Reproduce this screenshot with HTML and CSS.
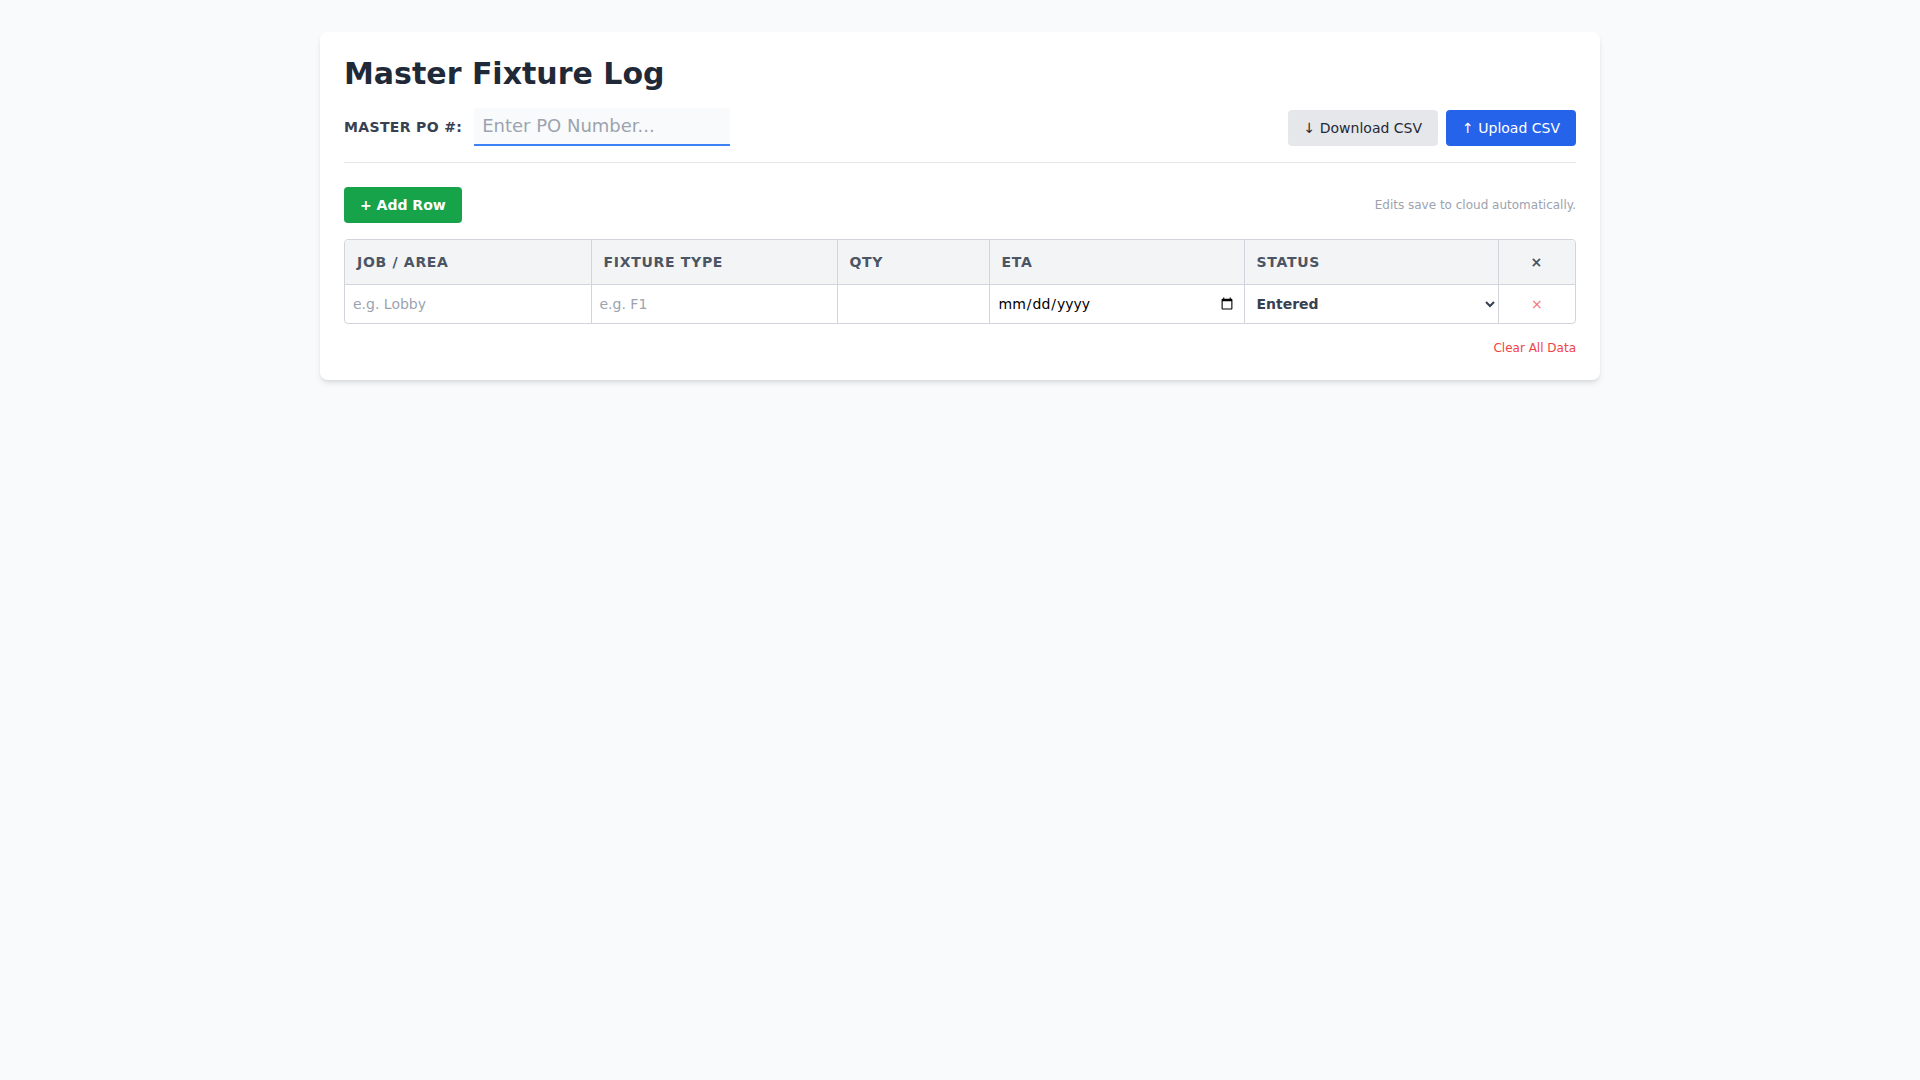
FILE: index.html
```html
<!DOCTYPE html>
<html lang="en">
<head>
  <meta charset="UTF-8">
  <meta name="viewport" content="width=device-width, initial-scale=1.0">
  <title>Master Fixture Log</title>
  <link rel="stylesheet" href="styles.css">
</head>
<body>
  <div class="card">
    <h1>Master Fixture Log</h1>

    <!-- PO number + csv buttons -->
    <div class="top-row">
      <div class="po-group">
        <label class="po-label" for="poNumber">Master PO #:</label>
        <input id="poNumber" class="po-input" type="text" placeholder="Enter PO Number...">
      </div>
      <div class="csv-actions">
        <button class="btn btn-gray">↓ Download CSV</button>
        <button class="btn btn-blue">↑ Upload CSV</button>
      </div>
    </div>

    <div class="toolbar">
      <button class="btn btn-green">+ Add Row</button>
      <span class="save-note">Edits save to cloud automatically.</span>
    </div>

    <div class="table-wrap">
      <table class="log-table">
        <colgroup>
          <col class="col-job">
          <col class="col-type">
          <col class="col-qty">
          <col class="col-eta">
          <col class="col-status">
          <col>
        </colgroup>
        <thead>
          <tr>
            <th>Job / Area</th>
            <th>Fixture Type</th>
            <th>Qty</th>
            <th>ETA</th>
            <th>Status</th>
            <th class="center">×</th>
          </tr>
        </thead>
        <tbody id="rows">
          <tr>
            <td><input class="cell-input" type="text" placeholder="e.g. Lobby"></td>
            <td><input class="cell-input" type="text" placeholder="e.g. F1"></td>
            <td><input class="cell-input" type="number"></td>
            <td><input class="cell-input" type="date"></td>
            <td>
              <select class="cell-select">
                <option>Entered</option>
                <option>Ordered</option>
                <option>Shipped</option>
                <option>Received</option>
              </select>
            </td>
            <td class="center"><button class="del-btn">×</button></td>
          </tr>
        </tbody>
      </table>
    </div>

    <div class="footer-row">
      <button class="clear-btn">Clear All Data</button>
    </div>
  </div>
</body>
</html>
```

FILE: styles.css
```css
* {
  box-sizing: border-box;
}

body {
  margin: 0;
  padding: 32px;
  background: #f9fafb;
  font-family: 'DejaVu Sans', 'Noto Sans', sans-serif;
  color: #1f2937;
}

.card {
  max-width: 1280px;
  margin: 0 auto;
  padding: 24px;
  background: #fff;
  border-radius: 8px;
  box-shadow: 0 4px 6px -1px rgba(0, 0, 0, 0.1), 0 2px 4px -2px rgba(0, 0, 0, 0.1);
}

h1 {
  margin: 0 0 16px;
  font-size: 30px;
  line-height: 36px;
  font-weight: bold;
  color: #1f2937;
}

.top-row {
  display: flex;
  justify-content: space-between;
  align-items: flex-end;
  padding-bottom: 16px;
  margin-bottom: 24px;
  border-bottom: 1px solid #e5e7eb;
}

.po-group {
  display: flex;
  align-items: center;
  gap: 12px;
}

.po-label {
  font-size: 14px;
  line-height: 20px;
  font-weight: bold;
  text-transform: uppercase;
  letter-spacing: 0.025em;
  color: #374151;
}

.po-input {
  width: 256px;
  padding: 4px 8px;
  font-family: inherit;
  font-size: 18px;
  line-height: 28px;
  border: none;
  border-bottom: 2px solid #3b82f6;
  background: #f9fafb;
  color: #1f2937;
  outline: none;
}

.po-input::placeholder,
.cell-input::placeholder {
  color: #9ca3af;
}

.csv-actions {
  display: flex;
  gap: 8px;
}

.btn {
  font-family: inherit;
  font-size: 14px;
  line-height: 20px;
  padding: 8px 16px;
  border: none;
  border-radius: 4px;
  cursor: pointer;
}

.btn-gray {
  background: #e5e7eb;
  color: #1f2937;
}

.btn-blue {
  background: #2563eb;
  color: #fff;
}

.btn-green {
  background: #16a34a;
  color: #fff;
  font-weight: bold;
}

.toolbar {
  display: flex;
  justify-content: space-between;
  align-items: center;
  margin-bottom: 16px;
}

.save-note {
  font-size: 12px;
  line-height: 16px;
  color: #9ca3af;
}

.table-wrap {
  border: 1px solid #d1d5db;
  border-radius: 4px;
  overflow: hidden;
}

.log-table {
  width: 100%;
  border-collapse: collapse;
  table-layout: fixed;
}

.col-job { width: 246px; }
.col-type { width: 246px; }
.col-qty { width: 152px; }
.col-eta { width: 255px; }
.col-status { width: 254px; }

.log-table th {
  padding: 12px;
  background: #f3f4f6;
  border-bottom: 1px solid #d1d5db;
  text-align: left;
  font-size: 14px;
  line-height: 20px;
  font-weight: bold;
  text-transform: uppercase;
  letter-spacing: 0.05em;
  color: #4b5563;
}

.log-table th + th,
.log-table td + td {
  border-left: 1px solid #d1d5db;
}

.log-table td {
  padding: 0;
  height: 38px;
}

.log-table .center {
  text-align: center;
}

.cell-input {
  display: block;
  width: 100%;
  height: 38px;
  padding: 0 8px;
  border: none;
  background: transparent;
  font-family: inherit;
  font-size: 14px;
  outline: none;
}

.cell-select {
  display: block;
  width: 100%;
  height: 38px;
  padding: 0 4px 0 8px;
  border: none;
  background: transparent;
  font-family: inherit;
  font-size: 14px;
  font-weight: bold;
  color: #374151;
  outline: none;
}

.del-btn {
  border: none;
  background: none;
  padding: 0;
  font-family: inherit;
  font-size: 14px;
  line-height: 20px;
  color: #f87171;
  cursor: pointer;
}

.footer-row {
  display: flex;
  justify-content: flex-end;
  margin-top: 16px;
}

.clear-btn {
  border: none;
  background: none;
  padding: 0;
  font-family: inherit;
  font-size: 12px;
  line-height: 16px;
  color: #ef4444;
  cursor: pointer;
}
```
